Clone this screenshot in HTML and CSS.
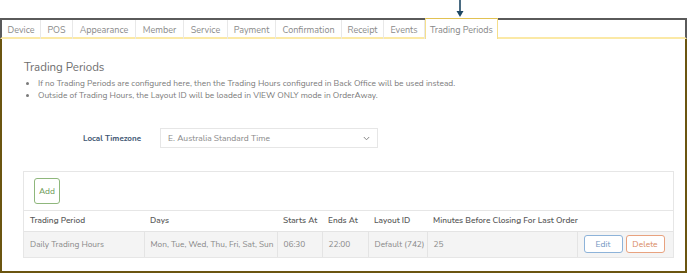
FILE: index.html
```html
<!DOCTYPE html>
<html>
<head>
<meta charset="utf-8">
<link rel="stylesheet" href="styles.css">
</head>
<body>
<div class="strip">
  <svg class="arrow" width="8" height="18" viewBox="0 0 8 18"><line x1="4" y1="0" x2="4" y2="13" stroke="#1d4763" stroke-width="1.6"/><path d="M0.5 11 L4 17 L7.5 11 Z" fill="#1d4763"/></svg>
</div>
<div class="frame">
  <div class="tabs">
    <div class="tab" style="width:39px">Device</div>
    <div class="tab" style="width:32px">POS</div>
    <div class="tab" style="width:63px">Appearance</div>
    <div class="tab" style="width:48px">Member</div>
    <div class="tab" style="width:44px">Service</div>
    <div class="tab" style="width:48px">Payment</div>
    <div class="tab" style="width:66px">Confirmation</div>
    <div class="tab" style="width:42px">Receipt</div>
    <div class="tab" style="width:41px">Events</div>
    <div class="tab active" style="width:73px">Trading Periods</div>
  </div>
  <div class="content">
    <h1 class="title">Trading Periods</h1>
    <ul class="notes">
      <li>If no Trading Periods are configured here, then the Trading Hours configured in Back Office will be used instead.</li>
      <li>Outside of Trading Hours, the Layout ID will be loaded in VIEW ONLY mode in OrderAway.</li>
    </ul>
    <div class="tz-row">
      <label class="tz-label">Local Timezone</label>
      <div class="select">
        <span>E. Australia Standard Time</span>
        <svg width="7" height="5" viewBox="0 0 7 5"><path d="M0.8 1 L3.5 3.8 L6.2 1" fill="none" stroke="#888" stroke-width="1"/></svg>
      </div>
    </div>
    <div class="panel">
      <div class="panel-top"><button class="btn add">Add</button></div>
      <table class="grid">
        <colgroup>
          <col style="width:120px"><col style="width:133px"><col style="width:45px"><col style="width:46px"><col style="width:59px"><col style="width:150px"><col>
        </colgroup>
        <thead>
          <tr>
            <th>Trading Period</th>
            <th>Days</th>
            <th>Starts At</th>
            <th>Ends At</th>
            <th>Layout ID</th>
            <th>Minutes Before Closing For Last Order</th>
            <th></th>
          </tr>
        </thead>
        <tbody>
          <tr>
            <td>Daily Trading Hours</td>
            <td>Mon, Tue, Wed, Thu, Fri, Sat, Sun</td>
            <td>06:30</td>
            <td>22:00</td>
            <td>Default (742)</td>
            <td>25</td>
            <td class="actions"><button class="btn edit">Edit</button><button class="btn del">Delete</button></td>
          </tr>
        </tbody>
      </table>
    </div>
  </div>
</div>
</body>
</html>
```

FILE: styles.css
```css
* { box-sizing: border-box; }
html, body { margin: 0; padding: 0; background: #fff; }
body {
  width: 688px;
  height: 273px;
  overflow: hidden;
  font-family: "Nunito", "Lato", "Noto Sans", sans-serif;
  color: #777;
}
.strip { height: 18px; padding-left: 456px; }
.arrow { display: block; }
.frame { width: 687px; }
.tabs {
  display: flex;
  height: 21px;
  border-top: 2px solid #5a5a5a;
  border-left: 2px solid #5a5a5a;
  border-right: 2px solid #5a5a5a;
  border-bottom: 2px solid #fbe9a6;
}
.tab {
  font-size: 9px;
  color: #8a8a8a;
  display: flex;
  align-items: center;
  justify-content: center;
  border-right: 1px solid #e8e8e8;
  height: 19px;
  white-space: nowrap;
}
.tab.active {
  border: 1px solid #f5df8c;
  border-top: 1px solid #e2c252;
  border-bottom: none;
  height: 21px;
  margin-top: -2px;
  margin-bottom: -2px;
  background: #fff;
  color: #888;
  padding-top: 1px;
}
.content {
  height: 234px;
  border-left: 2px solid #6b5510;
  border-right: 2px solid #6b5510;
  border-bottom: 2px solid #6b5510;
  padding: 20px 12px 0 21px;
}
.title {
  margin: 0 0 0 1px;
  font-size: 11.5px;
  font-weight: 400;
  color: #6d6d6d;
  line-height: 16px;
}
.notes {
  margin: 3px 0 0 0;
  padding-left: 15px;
  font-size: 8.4px;
  color: #7a7a7a;
  line-height: 12px;
}
.tz-row {
  display: flex;
  align-items: center;
  margin-top: 26px;
  padding-left: 60px;
}
.tz-label {
  width: 77px;
  font-size: 8px;
  font-weight: 700;
  color: #3d5572;
}
.select {
  width: 218px;
  height: 20px;
  border: 1px solid #e6e6e6;
  display: flex;
  align-items: center;
  justify-content: space-between;
  padding: 0 7px 0 7px;
  font-size: 8.5px;
  color: #888;
}
.panel {
  margin-top: 23px;
  width: 651px;
  border: 1px solid #e6e6e6;
}
.panel-top {
  height: 39px;
  padding: 6px 0 0 10px;
  border-bottom: 1px solid #e6e6e6;
}
.btn {
  font-family: inherit;
  background: #fff;
  border-radius: 3px;
  font-size: 8.5px;
  cursor: pointer;
  padding: 0;
}
.add {
  width: 26px;
  height: 26px;
  border: 1px solid #8fb77c;
  color: #6e9a58;
}
.grid {
  width: 100%;
  table-layout: fixed;
  border-collapse: collapse;
  font-size: 8.3px;
}
.grid th {
  text-align: left;
  font-weight: 600;
  color: #5a5a5a;
  height: 20px;
  padding: 0 6px;
  border-bottom: 1px solid #e4e4e4;
  white-space: nowrap;
}
.grid td {
  background: #f4f4f4;
  color: #888;
  height: 26px;
  padding: 0 6px;
  border-left: 1px solid #e4e4e4;
  white-space: nowrap;
}
.grid td:first-child { border-left: none; }
.actions { text-align: right; padding-right: 9px !important; }
.edit {
  width: 39px;
  height: 18px;
  border: 1px solid #8db3d9;
  color: #6f95bf;
}
.del {
  width: 39px;
  height: 18px;
  margin-left: 3px;
  border: 1px solid #e8a27f;
  color: #d98a63;
}
```
